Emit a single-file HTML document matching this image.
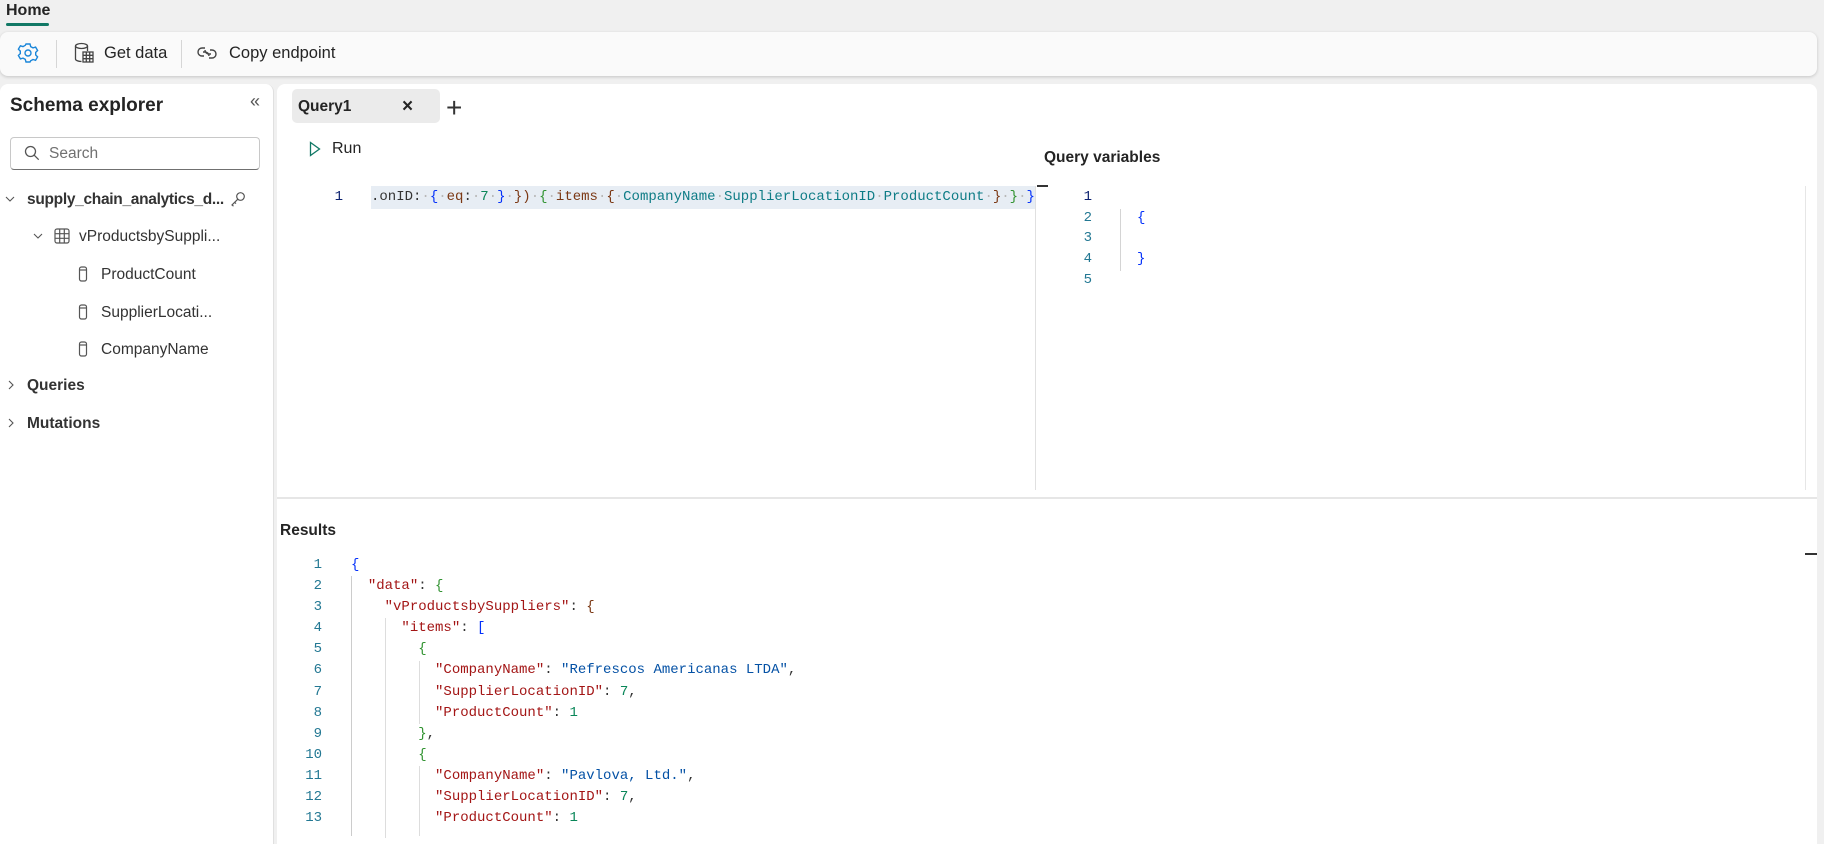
<!DOCTYPE html>
<html><head><meta charset="utf-8"><style>
*{margin:0;padding:0;box-sizing:border-box}
body{width:1824px;height:831px;overflow:hidden;background:#f0f0f0;font-family:"Segoe UI","Liberation Sans",sans-serif;color:#242424;position:relative}
.a{position:absolute;white-space:pre}
.mono{font-family:"Liberation Mono","DejaVu Sans Mono",monospace;font-size:14px}
.ln{color:#237893;text-align:right;width:30px}
.k{color:#a31515}.s{color:#0451a5}.n{color:#098658}
.b1{color:#0431fa}.b2{color:#319331}.b3{color:#7b3814}
.d{color:#b8b8b8}.f{color:#0e7c86}.kw{color:#7b3814}
.t{font-size:15.5px;color:#333}
</style></head><body>
<div class="a" style="left:6px;top:2px;font-size:16px;font-weight:600">Home</div>
<div class="a" style="left:6px;top:23px;width:43px;height:3px;background:#117865;border-radius:2px"></div>
<div class="a" style="left:0;top:32px;width:1817px;height:44px;background:#fafafa;border-radius:8px;box-shadow:0 1px 3px rgba(0,0,0,.18)"></div>
<svg class="a" style="left:17px;top:42px" width="22" height="22" viewBox="0 0 22 22" fill="none" stroke="#1a86d9" stroke-width="1.4"><path d="M9 2h4l.7 2.6 2.3 1.3 2.6-.8 2 3.4-1.9 1.9v2.6l1.9 1.9-2 3.4-2.6-.8-2.3 1.3L13 20H9l-.7-2.6-2.3-1.3-2.6.8-2-3.4 1.9-1.9V9.1L1.4 7.2l2-3.4 2.6.8 2.3-1.3z"/><circle cx="11" cy="11" r="3"/></svg>
<div class="a" style="left:56px;top:40px;width:1px;height:28px;background:#d6d6d6"></div>
<svg class="a" style="left:73px;top:42px" width="22" height="22" viewBox="0 0 22 22" fill="none" stroke="#444" stroke-width="1.3"><ellipse cx="8.5" cy="4" rx="6" ry="2.5"/><path d="M2.5 4v13c0 1.4 2.7 2.5 6 2.5M14.5 4v5"/><rect x="10" y="10" width="10" height="10"/><path d="M10 13.3h10M10 16.7h10M13.3 10v10M16.7 10v10"/></svg>
<div class="a" style="left:104px;top:44px;font-size:16.5px">Get data</div>
<div class="a" style="left:181px;top:40px;width:1px;height:28px;background:#d6d6d6"></div>
<svg class="a" style="left:196px;top:44px" width="22" height="18" viewBox="0 0 22 18" fill="none" stroke="#444" stroke-width="1.4"><path d="M9 4H6a4 4 0 0 0 0 8h2M13 14h3a4 4 0 0 0 0-8h-2"/><path d="M7 8h2a4 4 0 0 1 4 4M15 10h-2a4 4 0 0 1-4-4"/></svg>
<div class="a" style="left:229px;top:44px;font-size:16.5px">Copy endpoint</div>

<!-- left panel -->
<div class="a" style="left:0;top:84px;width:274px;height:760px;background:#fff;border-radius:8px 8px 0 0;border-right:1px solid #e0e0e0"></div>
<div class="a" style="left:10px;top:95px;font-size:19px;font-weight:600">Schema explorer</div>
<div class="a" style="left:250px;top:91px;font-size:18px;color:#555">«</div>
<div class="a" style="left:10px;top:137px;width:250px;height:33px;border:1px solid #c8c8c8;border-bottom-color:#707070;border-radius:4px"></div>
<svg class="a" style="left:24px;top:145px" width="16" height="16" viewBox="0 0 16 16" fill="none" stroke="#555" stroke-width="1.3"><circle cx="6.5" cy="6.5" r="5"/><path d="M10.2 10.2l4.5 4.5"/></svg>
<div class="a" style="left:49px;top:145px;font-size:15.5px;color:#707070">Search</div>
<svg class="a" style="left:5px;top:195px" width="10" height="8" viewBox="0 0 10 8" fill="none" stroke="#555" stroke-width="1.1"><path d="M1 2l4 4 4-4"/></svg>
<div class="a t" style="left:27px;top:191px;font-weight:600;letter-spacing:-0.3px">supply_chain_analytics_d...</div>
<svg class="a" style="left:230px;top:191px" width="16" height="16" viewBox="0 0 16 16" fill="none" stroke="#555" stroke-width="1.2"><circle cx="10.5" cy="5.5" r="3.8"/><path d="M7.8 8.2L2 14l1.5 1.2M4.5 11.3l1.5 1.3"/></svg>
<svg class="a" style="left:33px;top:232px" width="10" height="8" viewBox="0 0 10 8" fill="none" stroke="#555" stroke-width="1.1"><path d="M1 2l4 4 4-4"/></svg>
<svg class="a" style="left:54px;top:228px" width="16" height="16" viewBox="0 0 16 16" fill="none" stroke="#555" stroke-width="1.2"><rect x="1" y="1" width="14" height="14" rx="2"/><path d="M1 5.7h14M1 10.3h14M5.7 1v14M10.3 1v14"/></svg>
<div class="a t" style="left:79px;top:228px">vProductsbySuppli...</div>
<div class="a t" style="left:101px;top:266px">ProductCount</div>
<div class="a t" style="left:101px;top:304px">SupplierLocati...</div>
<div class="a t" style="left:101px;top:341px">CompanyName</div>
<svg class="a" style="left:78px;top:266px" width="10" height="16" viewBox="0 0 10 16" fill="none" stroke="#555" stroke-width="1.2"><rect x="1.5" y="1" width="7" height="14" rx="2"/><path d="M1.5 4h7"/></svg>
<svg class="a" style="left:78px;top:304px" width="10" height="16" viewBox="0 0 10 16" fill="none" stroke="#555" stroke-width="1.2"><rect x="1.5" y="1" width="7" height="14" rx="2"/><path d="M1.5 4h7"/></svg>
<svg class="a" style="left:78px;top:341px" width="10" height="16" viewBox="0 0 10 16" fill="none" stroke="#555" stroke-width="1.2"><rect x="1.5" y="1" width="7" height="14" rx="2"/><path d="M1.5 4h7"/></svg>
<svg class="a" style="left:7px;top:380px" width="8" height="10" viewBox="0 0 8 10" fill="none" stroke="#555" stroke-width="1.1"><path d="M2 1l4 4-4 4"/></svg>
<div class="a t" style="left:27px;top:377px;font-weight:600">Queries</div>
<svg class="a" style="left:7px;top:418px" width="8" height="10" viewBox="0 0 8 10" fill="none" stroke="#555" stroke-width="1.1"><path d="M2 1l4 4-4 4"/></svg>
<div class="a t" style="left:27px;top:415px;font-weight:600">Mutations</div>

<!-- main panel -->
<div class="a" style="left:277px;top:84px;width:1540px;height:760px;background:#fff;border-radius:8px 8px 0 0"></div>
<div class="a" style="left:292px;top:89px;width:148px;height:34px;background:#ebebeb;border-radius:5px"></div>
<div class="a" style="left:298px;top:98px;font-size:15.5px;font-weight:600">Query1</div>
<div class="a" style="left:402px;top:96px;font-size:19px;font-weight:600">×</div>
<div class="a" style="left:446px;top:92px;font-size:28px;font-weight:300;color:#333">+</div>
<svg class="a" style="left:309px;top:141px" width="12" height="16" viewBox="0 0 12 16" fill="none" stroke="#117865" stroke-width="1.3"><path d="M1.5 1.5v13l9-6.5z"/></svg>
<div class="a" style="left:332px;top:140px;font-size:16px">Run</div>

<div class="a" style="left:371px;top:186px;width:664px;height:23px;background:#e7edf4"></div>
<div class="a mono ln" style="left:313px;top:189px;color:#0b216f">1</div>
<div class="a mono" style="left:371px;top:189px;color:#333">.onID:<span class="d">·</span><span class="b1">{</span><span class="d">·</span><span class="kw">eq</span>:<span class="d">·</span><span class="n">7</span><span class="d">·</span><span class="b1">}</span><span class="d">·</span><span class="b3">})</span><span class="d">·</span><span class="b2">{</span><span class="d">·</span><span class="kw">items</span><span class="d">·</span><span class="b3">{</span><span class="d">·</span><span class="f">CompanyName</span><span class="d">·</span><span class="f">SupplierLocationID</span><span class="d">·</span><span class="f">ProductCount</span><span class="d">·</span><span class="b3">}</span><span class="d">·</span><span class="b2">}</span><span class="d">·</span><span class="b1">}</span></div>
<div class="a" style="left:1035px;top:186px;width:1px;height:304px;background:#e0e0e0"></div>
<div class="a" style="left:1037px;top:185px;width:11px;height:2px;background:#333"></div>
<div class="a" style="left:1044px;top:149px;font-size:15.5px;font-weight:600">Query variables</div>
<div class="a" style="left:1805px;top:186px;width:1px;height:304px;background:#e6e6e6"></div>
<div class="a mono ln" style="left:1062px;top:189px;color:#0b216f">1</div>
<div class="a mono ln" style="left:1062px;top:210px">2</div>
<div class="a mono ln" style="left:1062px;top:230px">3</div>
<div class="a mono ln" style="left:1062px;top:251px">4</div>
<div class="a mono ln" style="left:1062px;top:272px">5</div>
<div class="a" style="left:1120px;top:209px;width:1px;height:62px;background:#d4d4d4"></div>
<div class="a mono b1" style="left:1137px;top:210px">{</div>
<div class="a mono b1" style="left:1137px;top:251px">}</div>

<div class="a" style="left:277px;top:497px;width:1540px;height:2px;background:#e6e6e6"></div>
<div class="a" style="left:280px;top:522px;font-size:15.5px;font-weight:600">Results</div>
<div class="a" style="left:1805px;top:553px;width:12px;height:2px;background:#333"></div>

<div class="a mono ln" style="left:292px;top:555px;line-height:21.1px;color:#237893">1
2
3
4
5
6
7
8
9
10
11
12
13</div>

<div class="a" style="left:351px;top:576px;width:1px;height:260px;background:#ccc"></div>
<div class="a" style="left:385px;top:618px;width:1px;height:220px;background:#ddd"></div>
<div class="a" style="left:419px;top:661px;width:1px;height:63px;background:#ddd"></div>
<div class="a" style="left:419px;top:766px;width:1px;height:70px;background:#ddd"></div>

<div class="a mono" style="left:351px;top:555px;line-height:21.1px;color:#333"><span class="b1">{</span>
  <span class="k">"data"</span>: <span class="b2">{</span>
    <span class="k">"vProductsbySuppliers"</span>: <span class="b3">{</span>
      <span class="k">"items"</span>: <span class="b1">[</span>
        <span class="b2">{</span>
          <span class="k">"CompanyName"</span>: <span class="s">"Refrescos Americanas LTDA"</span>,
          <span class="k">"SupplierLocationID"</span>: <span class="n">7</span>,
          <span class="k">"ProductCount"</span>: <span class="n">1</span>
        <span class="b2">}</span>,
        <span class="b2">{</span>
          <span class="k">"CompanyName"</span>: <span class="s">"Pavlova, Ltd."</span>,
          <span class="k">"SupplierLocationID"</span>: <span class="n">7</span>,
          <span class="k">"ProductCount"</span>: <span class="n">1</span></div>
</body></html>
